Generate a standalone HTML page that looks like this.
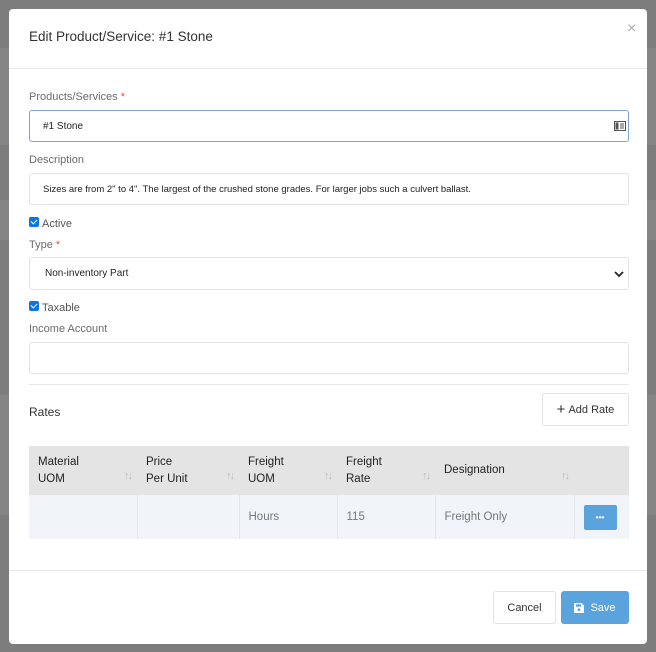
<!DOCTYPE html>
<html><head><style>
*{box-sizing:border-box;margin:0;padding:0}
body{width:656px;height:652px;background:#7d7d7d;font-family:"Liberation Sans",sans-serif;position:relative;overflow:hidden;color:#333}
.band{position:absolute;left:0;width:656px;background:#858585}
.m{position:absolute;left:9px;top:9px;width:638px;height:635px;background:#fff;border-radius:4px}
.a{position:absolute}
.lbl{position:absolute;left:29px;font-size:11px;color:#6b6b6b}
.req{color:#e55353}
.inp{position:absolute;left:29px;width:600px;border:1px solid #e3e3e3;border-radius:3px;font-size:10px;color:#222;padding-left:13px;display:flex;align-items:center}
.cb{position:absolute;left:29px;width:10px;height:10px;background:#0b75e8;border-radius:2px}
.cb:after{content:"";position:absolute;left:3px;top:1px;width:3px;height:5px;border:solid #fff;border-width:0 1.5px 1.5px 0;transform:rotate(45deg)}
.cbl{position:absolute;left:42px;font-size:11px;color:#555}
table{position:absolute;left:29px;top:446px;width:600px;border-collapse:collapse;font-size:11.5px}
th{background:#e4e4e4;height:49px;text-align:left;font-weight:normal;color:#222;padding-left:9px;line-height:17px;position:relative}
td{background:#f1f4f8;height:44px;border-left:1px solid #e2e5e9;color:#777;padding-left:9px}
td:first-child{border-left:none}
.s{position:absolute;right:6px;top:22px;font-size:11px;color:#bbb;letter-spacing:-2px}
</style></head><body>
<div class="band" style="top:48px;height:97px"></div>
<div class="band" style="top:200px;height:40px"></div>
<div class="band" style="top:395px;height:120px"></div>
<div class="m"></div>
<div class="a" style="left:29px;top:29px;font-size:13.5px;color:#333">Edit Product/Service: #1 Stone</div>
<div class="a" style="left:627px;top:20px;font-size:16px;color:#aaa">×</div>
<div class="a" style="left:9px;top:68px;width:638px;height:1px;background:#e8e8e8"></div>
<div class="lbl" style="top:91px">Products/Services <span class="req">*</span></div>
<div class="inp" style="top:110px;height:32px;border-color:#7ea6d4">#1 Stone
<svg class="a" style="right:2px;top:10px" width="12" height="10" viewBox="0 0 12 10"><rect x="0.5" y="0.5" width="11" height="9" fill="#fff" stroke="#555"/><rect x="1.5" y="1.5" width="3" height="7" fill="#555"/><path d="M6 3h4M6 5h4M6 7h4" stroke="#555"/></svg></div>
<div class="lbl" style="top:154px">Description</div>
<div class="inp" style="top:173px;height:32px;font-size:9.5px">Sizes are from 2" to 4". The largest of the crushed stone grades. For larger jobs such a culvert ballast.</div>
<div class="cb" style="top:217px"></div><div class="cbl" style="top:218px">Active</div>
<div class="lbl" style="top:239px">Type <span class="req">*</span></div>
<div class="inp" style="top:257px;height:33px;padding-left:15px">Non-inventory Part
<svg class="a" style="right:4px;top:12px" width="10" height="8" viewBox="0 0 10 8"><path d="M1 2l4 4 4-4" fill="none" stroke="#222" stroke-width="1.8"/></svg></div>
<div class="cb" style="top:301px"></div><div class="cbl" style="top:302px">Taxable</div>
<div class="lbl" style="top:323px">Income Account</div>
<div class="inp" style="top:342px;height:32px"></div>
<div class="a" style="left:29px;top:384px;width:600px;height:1px;background:#e8e8e8"></div>
<div class="a" style="left:29px;top:405px;font-size:12px;color:#333">Rates</div>
<div class="a" style="left:542px;top:393px;width:87px;height:33px;border:1px solid #e3e3e3;border-radius:3px;font-size:11px;color:#333;display:flex;align-items:center;justify-content:center"><span style="font-size:15px;margin-right:3px">+</span>Add Rate</div>
<table>
<tr><th style="width:108px">Material<br>UOM<span class="s">↑↓</span></th><th style="width:102px">Price<br>Per Unit<span class="s">↑↓</span></th><th style="width:98px">Freight<br>UOM<span class="s">↑↓</span></th><th style="width:98px">Freight<br>Rate<span class="s">↑↓</span></th><th style="width:139px">Designation<span class="s" style="right:6px">↑↓</span></th><th></th></tr>
<tr><td></td><td></td><td>Hours</td><td>115</td><td>Freight Only</td><td><div style="margin-left:0;width:33px;height:25px;background:#5aa3dd;border-radius:2px;color:#fff;font-size:8px;text-align:center;line-height:25px;font-weight:bold">•••</div></td></tr>
</table>
<div class="a" style="left:9px;top:570px;width:638px;height:1px;background:#e8e8e8"></div>
<div class="a" style="left:493px;top:591px;width:63px;height:33px;border:1px solid #e3e3e3;border-radius:3px;font-size:11px;color:#333;display:flex;align-items:center;justify-content:center">Cancel</div>
<div class="a" style="left:561px;top:591px;width:68px;height:33px;background:#5aa3dd;border-radius:3px;font-size:11px;color:#fff;display:flex;align-items:center;justify-content:center">
<svg width="10" height="10" viewBox="0 0 10 10" style="margin-right:6px"><path d="M0 1a1 1 0 0 1 1-1h6.5l2.5 2.5V9a1 1 0 0 1-1 1H1a1 1 0 0 1-1-1z" fill="#fff"/><rect x="2" y="1.3" width="5" height="2.4" fill="#5aa3dd"/><circle cx="5" cy="6.8" r="1.4" fill="#5aa3dd"/></svg>Save</div>
</body></html>
